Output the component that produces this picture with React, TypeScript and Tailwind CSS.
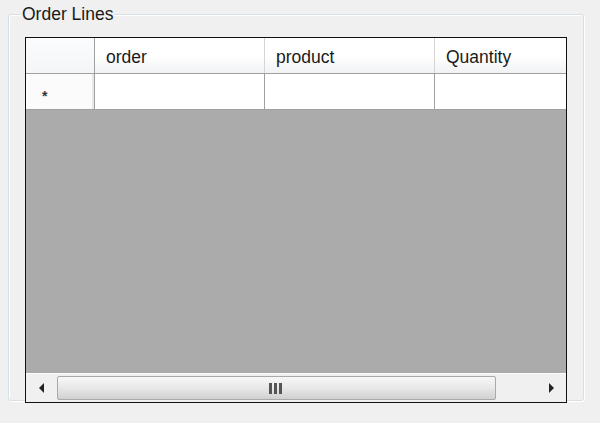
import { FC } from "react";

const font = { fontFamily: '"Liberation Sans", Arial, sans-serif' };

const HeaderCell: FC<{ label?: string; w: string; last?: boolean }> = ({ label, w, last }) => (
	<div
		className={`${w} h-full shrink-0 flex items-center pt-[3px] pl-[11px] text-[17.5px] text-[#1a1a1a] bg-gradient-to-b from-white via-white to-[#f1f2f4] ${
			last ? "" : "border-r border-[#d5d5d5]"
		}`}
	>
		{label}
	</div>
);

const App: FC = () => {
	return (
		<div className="w-[600px] h-[423px] bg-[#f0f0f0] overflow-hidden pt-[14px] pl-[8px]" style={font}>
			{/* group box */}
			<div className="relative w-[576px] h-[387px] border border-[#d5dfe5] rounded-[3px] shadow-[inset_1px_1px_0_#ffffff,1px_1px_0_#ffffff]">
				<span className="absolute -top-[12px] left-[12px] bg-[#f0f0f0] px-[1px] text-[17.5px] leading-[22px] text-[#1a1a1a]">
					Order Lines
				</span>

				{/* data grid */}
				<div className="ml-[16px] mt-[22px] w-[542px] h-[366px] border border-[#111] bg-[#ababab] flex flex-col overflow-hidden">
					{/* header row */}
					<div className="h-[36px] flex border-b border-[#a0a0a0] shrink-0">
						<div className="w-[69px] h-full shrink-0 bg-gradient-to-b from-[#fbfcfd] to-[#f3f5f7] border-r border-[#a0a0a0]" />
						<HeaderCell label="order" w="w-[170px]" />
						<HeaderCell label="product" w="w-[170px]" />
						<HeaderCell label="Quantity" w="w-[140px]" last />
					</div>

					{/* new row */}
					<div className="h-[36px] flex border-b border-[#a0a0a0] shrink-0 bg-white">
						<div className="w-[69px] h-full shrink-0 bg-[#fbfbfc] border-r border-[#a0a0a0] flex items-center pl-[16px]">
							<div className="h-full w-full border-r-2 border-[#e8e8e8] flex items-center">
								<span className="text-[14px] font-bold text-[#333] leading-none mt-[8px]">*</span>
							</div>
						</div>
						<div className="w-[170px] h-full shrink-0 border-r border-[#a0a0a0]" />
						<div className="w-[170px] h-full shrink-0 border-r border-[#a0a0a0]" />
						<div className="w-[140px] h-full shrink-0" />
					</div>

					<div className="flex-1" />

					{/* horizontal scrollbar */}
					<div className="h-[29px] shrink-0 flex items-center bg-[#f0f0f0] border-t border-[#fafafa]">
						<div className="w-[31px] h-full flex items-center justify-center">
							<svg width="6" height="10" viewBox="0 0 6 10">
								<path d="M5 0 L0 5 L5 10 Z" fill="#222" />
							</svg>
						</div>
						<div className="w-[439px] h-[24px] rounded-[2px] border border-[#a9a9a9] bg-gradient-to-b from-[#f7f7f7] via-[#e8e8e8] to-[#d0d0d0] flex items-center justify-center">
							<div className="flex gap-[2px] ml-[-2px]">
								<div className="w-[3px] h-[11px] bg-[#555]" />
								<div className="w-[3px] h-[11px] bg-[#555]" />
								<div className="w-[3px] h-[11px] bg-[#555]" />
							</div>
						</div>
						<div className="flex-1 h-full flex items-center justify-end pr-[12px]">
							<svg width="6" height="10" viewBox="0 0 6 10">
								<path d="M1 0 L6 5 L1 10 Z" fill="#222" />
							</svg>
						</div>
					</div>
				</div>
			</div>
		</div>
	);
};

export default App;
